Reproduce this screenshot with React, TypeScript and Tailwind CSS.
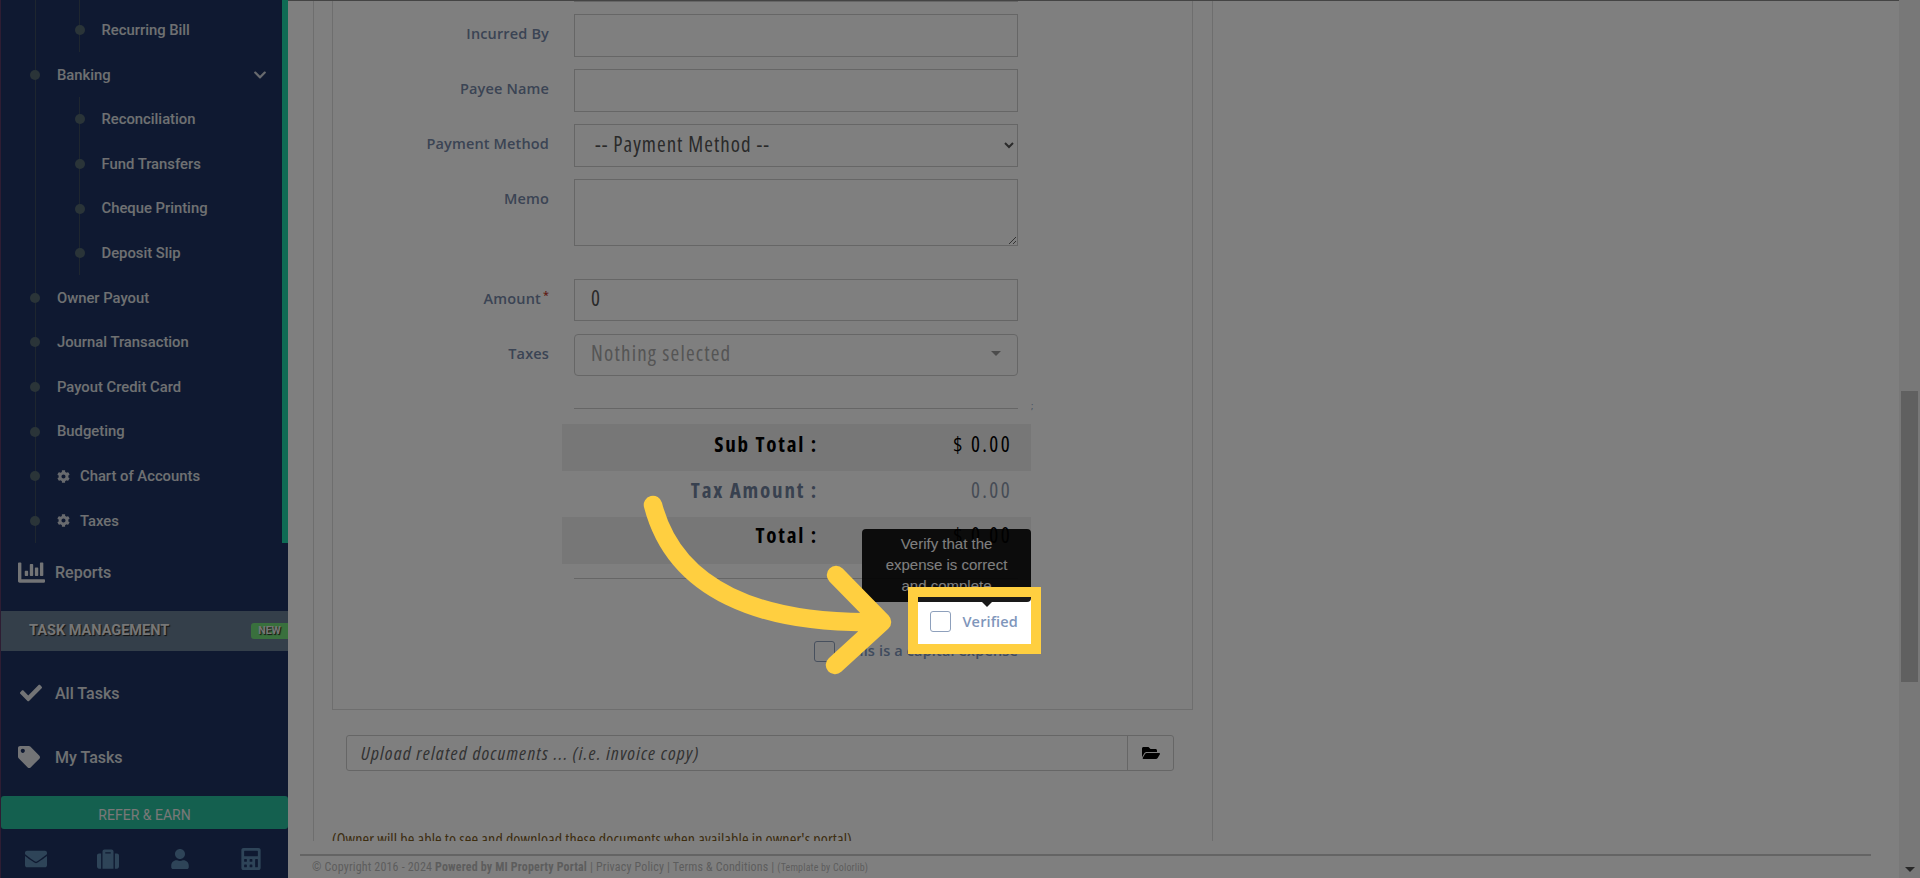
import React from "react";
import { FaChartBar, FaCheck, FaTag, FaEnvelope, FaSuitcase, FaUser, FaCalculator, FaCog, FaChevronDown, FaFolderOpen } from "react-icons/fa";

const Dot = () => <span className="-ml-[5.5px] mr-[17px] h-[10px] w-[10px] shrink-0 rounded-full bg-[#546870]" />;

function Item({ label, gear }: { label: string; gear?: boolean }) {
  return (
    <div className="flex h-[44.6px] items-center pr-[20px]">
      <Dot />
      {gear && <FaCog className="mr-[10px] h-[13px] w-[13px] text-[#d0d4dc]" />}
      <span>{label}</span>
    </div>
  );
}

function Field({ label, req, h, children }: { label?: string; req?: boolean; h: string; children?: React.ReactNode }) {
  return (
    <div className={`flex gap-[25px] ${h}`}>
      <div className="w-[216px] pt-[10px] text-right text-[14.5px] leading-[20px] font-semibold tracking-[0.15px] text-[#7688a8]">
        {label}
        {req && <sup className="ml-[2px] text-[#c0392b]">*</sup>}
      </div>
      <div className="w-[444px]">{children}</div>
    </div>
  );
}

const inputCls = "block h-full w-full border border-[#ccc] bg-white px-[16px] text-[21px] tracking-[1px] text-[#555] font-stretch-semi-condensed";

function Total({ label, value, band, muted, pb }: { label: string; value: string; band?: boolean; muted?: boolean; pb: string }) {
  return (
    <div className={`flex h-[46.5px] w-[469px] items-center text-[21px] font-stretch-semi-condensed ${pb} ${band ? "bg-[#eeeeee]" : ""}`}>
      <div className={`w-[256px] text-right font-bold tracking-[1.8px] ${muted ? "text-[#71829e]" : "text-black"}`}>{label}</div>
      <div className={`flex-1 pr-[19px] text-right tracking-[2.4px] ${muted ? "text-[#8d99ac]" : "text-black"}`}>{value}</div>
    </div>
  );
}

export default function App() {
  return (
    <div className="relative flex h-[878px] w-[1920px] overflow-hidden bg-white font-['Open_Sans',sans-serif]">
      {/* Sidebar */}
      <aside className="flex h-full w-[288px] shrink-0 flex-col border-l border-[#5c3a66] bg-[#1e3362] font-['Roboto',sans-serif] text-[14.8px] font-medium text-[#dfe0e4]">
        <div className="relative h-[543px] shrink-0 overflow-hidden">
          <div className="absolute top-0 right-0 h-full w-[6px] bg-[#1fd6a8]" />
          <div className="ml-[33.5px] h-full border-l border-[#3c4c5e]">
            <div className="ml-[43.5px] border-l border-[#3c4c5e] pt-[7.9px]">
              <Item label="Recurring Bill" />
            </div>
            <div className="flex h-[44.6px] items-center pr-[21px]">
              <Dot />
              <span>Banking</span>
              <FaChevronDown className="ml-auto h-[14px] w-[14px] text-[#d0d4dc]" />
            </div>
            <div className="ml-[43.5px] border-l border-[#3c4c5e]">
              <Item label="Reconciliation" />
              <Item label="Fund Transfers" />
              <Item label="Cheque Printing" />
              <Item label="Deposit Slip" />
            </div>
            <Item label="Owner Payout" />
            <Item label="Journal Transaction" />
            <Item label="Payout Credit Card" />
            <Item label="Budgeting" />
            <Item label="Chart of Accounts" gear />
            <Item label="Taxes" gear />
          </div>
        </div>
        <div className="flex h-[58px] shrink-0 items-center text-[16px]">
          <FaChartBar className="ml-[17px] mr-[10px] h-[27px] w-[27px] text-[#e6e8ec]" />
          <span className="pt-[2px]">Reports</span>
        </div>
        <div className="mt-[10px] flex h-[40px] shrink-0 items-center bg-[#687e94] pl-[28px] text-[14.5px] font-bold text-[#ececec] [text-shadow:1px_1px_1px_#222]">
          TASK MANAGEMENT
          <span className="ml-auto flex h-[16px] w-[37px] items-center justify-center rounded-l-[3px] bg-[#72e07a] text-[10.5px]">NEW</span>
        </div>
        <div className="mt-[10px] flex h-[64px] shrink-0 items-center text-[16px]">
          <FaCheck className="ml-[19px] mr-[13px] h-[22px] w-[22px] text-[#e6e8ec]" />
          <span className="pt-[2px]">All Tasks</span>
        </div>
        <div className="flex h-[64px] shrink-0 items-center text-[16px]">
          <FaTag className="ml-[17px] mr-[15px] h-[22px] w-[22px] text-[#e6e8ec]" />
          <span className="pt-[2px]">My Tasks</span>
        </div>
        <div className="mt-[7px] flex h-[33px] shrink-0 items-center justify-center rounded-[3px] bg-[#28c09e] pt-[5px] text-[14px] font-normal text-[#f0f0f0]">
          REFER &amp; EARN
        </div>
        <div className="flex flex-1 items-center justify-between pt-[11px] pr-[26px] pl-[24px] text-[#5c88b0]">
          <FaEnvelope className="h-[22px] w-[22px]" />
          <FaSuitcase className="h-[22px] w-[22px]" />
          <FaUser className="h-[20px] w-[20px]" />
          <FaCalculator className="h-[22px] w-[22px]" />
        </div>
      </aside>

      {/* Main */}
      <main className="flex min-w-0 flex-1 flex-col">
        <div className="h-[1px] shrink-0 bg-[#888]" />
        <div className="ml-[25px] h-[840px] w-[900px] shrink-0 overflow-hidden border-x border-[#ddd] px-[18px]">
          <div className="-mt-[61px] flex h-[770px] w-[861px] flex-col border border-[#ddd] pt-[18px]">
            <Field h="h-[43px]"><input className={inputCls} /></Field>
            <div className="mt-[12px]"><Field label="Incurred By" h="h-[43px]"><input className={inputCls} /></Field></div>
            <div className="mt-[12px]"><Field label="Payee Name" h="h-[43px]"><input className={inputCls} /></Field></div>
            <div className="mt-[12px]">
              <Field label="Payment Method" h="h-[43px]">
                <select className={inputCls + " pb-[3px]"} defaultValue="">
                  <option value="">-- Payment Method --</option>
                </select>
              </Field>
            </div>
            <div className="mt-[12px]">
              <Field label="Memo" h="h-[67px]"><textarea className={inputCls} /></Field>
            </div>
            <div className="mt-[33px]">
              <Field label="Amount" req h="h-[42px]">
                <div className="flex h-full items-center border border-[#ccc] px-[16px] pb-[2px] text-[21px] text-[#555] font-stretch-semi-condensed">0</div>
              </Field>
            </div>
            <div className="mt-[13px]">
              <Field label="Taxes" h="h-[42px]">
                <div className="flex h-full items-center justify-between rounded-[4px] border border-[#ccc] pr-[16px] pb-[3px] pl-[16px] text-[21px] tracking-[1.2px] text-[#aaa] font-stretch-semi-condensed">
                  Nothing selected
                  <span className="h-0 w-0 border-x-[5px] border-t-[5px] border-x-transparent border-t-[#999]" />
                </div>
              </Field>
            </div>
            <div className="relative mt-[32px] ml-[241px] h-[1px] w-[444px] bg-[#ccc]">
              <span className="absolute -top-[9px] left-[457px] text-[9px] text-[#8297bb]">;</span>
            </div>
            <div className="mt-[15px] ml-[229px]">
              <Total label="Sub Total :" value="$ 0.00" band pb="pb-[5px]" />
              <Total label="Tax Amount :" value="0.00" muted pb="pb-[6px]" />
              <Total label="Total :" value="$ 0.00" band pb="pb-[9px]" />
            </div>
            <div className="mt-[14px] ml-[241px] h-[1px] w-[444px] bg-[#ccc]" />
            <div className="mt-[32px] mr-[174px] flex items-center justify-end text-[14.5px] font-semibold tracking-[0.15px] text-[#7f96bb]">
              <span className="mr-[11px] h-[21px] w-[21px] rounded-[3px] border border-[#8ea0bc] bg-white" />
              Verified
            </div>
            <div className="mt-[8px] mr-[174px] flex items-center justify-end text-[14.5px] font-semibold tracking-[0.15px] text-[#7f96bb]">
              <span className="mr-[11px] h-[21px] w-[21px] rounded-[3px] border border-[#8ea0bc] bg-white" />
              This is a capital expense
            </div>
          </div>
          <div className="mt-[25px] ml-[14px] flex h-[36px] w-[828px] items-center rounded-[3px] border border-[#ccc]">
            <span className="flex-1 pl-[14px] text-[19px] tracking-[1.2px] text-[#666] italic font-stretch-semi-condensed">Upload related documents ... (i.e. invoice copy)</span>
            <span className="flex h-full w-[46px] items-center justify-center border-l border-[#ccc] text-black">
              <FaFolderOpen className="h-[18px] w-[18px]" />
            </span>
          </div>
          <div className="mt-[58px] text-[16px] leading-[20px] tracking-[0.12px] text-[#7a5a1e] font-stretch-condensed">(Owner will be able to see and download these documents when available in owner's portal)</div>
        </div>
        <div className="mt-[13px] ml-[12px] w-[1571px] border-t-2 border-[#c8c8c8] pt-[2px] pl-[12px] font-['Roboto',sans-serif] text-[12px] leading-[18px] tracking-[0.17px] text-[#bbb] font-stretch-condensed">
          © Copyright 2016 - 2024 <b className="font-bold">Powered by MI Property Portal</b> | Privacy Policy | Terms &amp; Conditions | <span className="text-[10px]">(Template by Colorlib)</span>
        </div>
      </main>

      {/* Page scrollbar */}
      <div className="flex h-full w-[21px] shrink-0 flex-col items-center bg-[#f1f1f1] pt-[391px] pb-[6px]">
        <div className="h-[291px] w-[17px] bg-[#c1c1c1]" />
        <span className="mt-auto h-0 w-0 border-x-[5px] border-t-[5px] border-x-transparent border-t-[#505050]" />
      </div>

      {/* Tooltip */}
      <div className="absolute top-[529px] left-[862px] flex h-[73px] w-[169px] flex-col items-center rounded-[4px] bg-black/90 px-[18px] pt-[4px] text-center font-['Liberation_Sans',sans-serif] text-[15px] leading-[21px] font-normal text-white">
        Verify that the expense is correct and complete
        <span className="absolute top-[73px] left-[120px] h-0 w-0 border-x-[5px] border-t-[5px] border-x-transparent border-t-black/90" />
      </div>

      {/* Walkthrough spotlight */}
      <div className="absolute top-[587px] left-[908px] h-[67px] w-[133px] border-[10px] border-[#ffcf40] shadow-[0_0_0_3000px_rgba(0,0,0,0.5)]" />

      {/* Arrow */}
      <svg className="absolute top-0 left-0 h-[878px] w-[1920px]" viewBox="0 0 1920 878" fill="none">
        <path d="M653 505 C675 590 760 625 880 622 M836 575 L882 622 L835 665" stroke="#ffcf40" strokeWidth="18.5" strokeLinecap="round" strokeLinejoin="round" />
      </svg>
    </div>
  );
}
